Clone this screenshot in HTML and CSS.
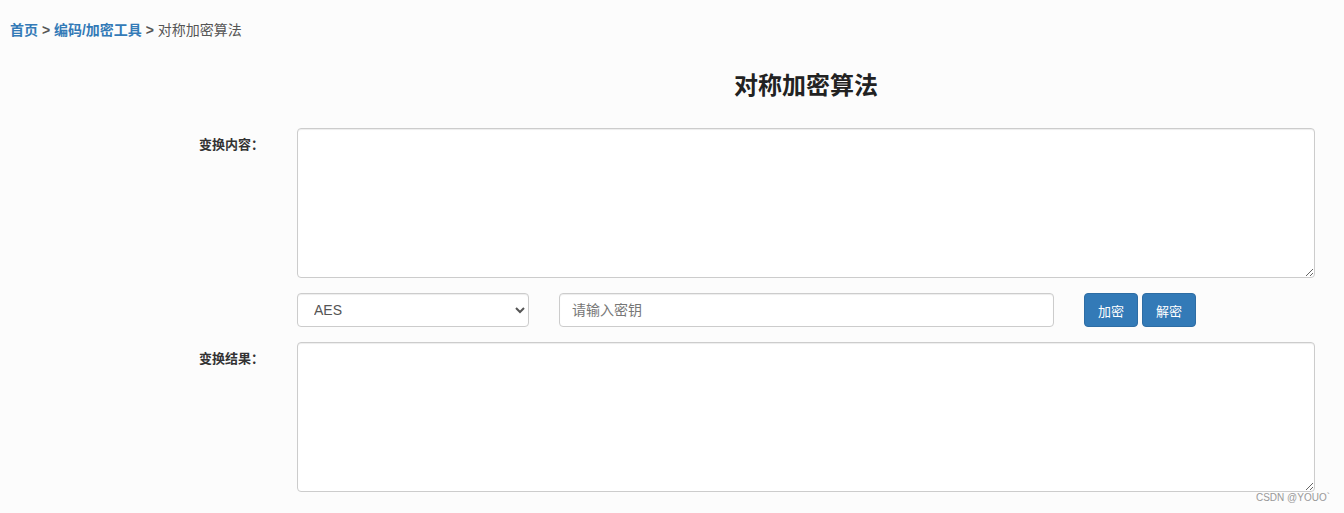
FILE: index.html
```html
<!DOCTYPE html>
<html lang="zh-CN">
<head>
<meta charset="utf-8">
<title>对称加密算法</title>
<link rel="stylesheet" href="styles.css">
</head>
<body>
<div class="crumbs">
  <a class="crumb-link" href="#">首页</a>
  <span class="sep">&gt;</span>
  <a class="crumb-link" href="#">编码/加密工具</a>
  <span class="sep">&gt;</span>
  <span class="crumb-current">对称加密算法</span>
</div>

<div class="form">
  <div class="row title-row">
    <div class="label-col"></div>
    <h1 class="title">对称加密算法</h1>
  </div>

  <div class="row">
    <label class="label-col field-label">变换内容：</label>
    <textarea class="area"></textarea>
  </div>

  <div class="row controls-row">
    <div class="label-col"></div>
    <div class="controls">
      <select class="ctl select">
        <option>AES</option>
        <option>DES</option>
        <option>3DES</option>
      </select>
      <input class="ctl key" type="text" placeholder="请输入密钥">
      <div class="btns">
        <button class="btn">加密</button>
        <button class="btn">解密</button>
      </div>
    </div>
  </div>

  <div class="row">
    <label class="label-col field-label">变换结果：</label>
    <textarea class="area"></textarea>
  </div>
</div>

<div class="watermark">CSDN @YOUO`</div>
</body>
</html>
```

FILE: styles.css
```css
html, body {
  margin: 0;
  padding: 0;
  background: #fcfcfc;
}

body {
  font-family: "Liberation Sans", "Noto Sans CJK SC", sans-serif;
  font-size: 14px;
  color: #333;
  height: 513px;
  position: relative;
  overflow: hidden;
}

.crumbs {
  padding: 20px 0 0 10px;
  height: 20px;
  line-height: 20px;
  font-size: 14px;
}

.crumb-link {
  color: #337ab7;
  font-weight: bold;
  text-decoration: none;
}

.sep {
  color: #555;
  font-weight: bold;
}

.crumb-current {
  color: #555;
}

.form {
  padding-right: 29px;
}

.row {
  display: flex;
}

.label-col {
  width: 297px;
  flex: 0 0 297px;
  box-sizing: border-box;
}

.title-row {
  margin-top: 29px;
  height: 34px;
  align-items: center;
}

.title {
  flex: 1;
  margin: 0;
  text-align: center;
  font-size: 24px;
  line-height: 34px;
  font-weight: bold;
  color: #222;
}

.title-row + .row {
  margin-top: 25px;
}

.field-label {
  text-align: right;
  padding-right: 33px;
  padding-top: 8px;
  font-size: 13px;
  font-weight: bold;
  line-height: 18px;
  color: #333;
}

.area {
  flex: 1;
  height: 150px;
  box-sizing: border-box;
  border: 1px solid #ccc;
  border-radius: 4px;
  background: #fff;
  padding: 6px 12px;
  margin: 0;
  font-family: inherit;
  font-size: 14px;
  box-shadow: inset 0 1px 1px rgba(0, 0, 0, 0.075);
}

.controls-row {
  margin: 15px 0 15px;
}

.controls {
  flex: 1;
  display: flex;
  align-items: center;
}

.ctl {
  height: 34px;
  box-sizing: border-box;
  border: 1px solid #ccc;
  border-radius: 4px;
  background: #fff;
  font-family: inherit;
  font-size: 14px;
  color: #555;
  margin: 0;
  box-shadow: inset 0 1px 1px rgba(0, 0, 0, 0.075);
}

.select {
  width: 232px;
  padding: 6px 12px;
}

.key {
  width: 495px;
  margin-left: 30px;
  padding: 6px 12px;
}

.key::placeholder {
  color: #777;
}

.btns {
  display: flex;
  gap: 4px;
  margin-left: 30px;
}

.btn {
  height: 34px;
  width: 54px;
  box-sizing: border-box;
  border: 1px solid #2e6da4;
  border-radius: 4px;
  background: #337ab7;
  color: #fff;
  font-family: inherit;
  font-size: 13px;
  padding: 0;
  cursor: pointer;
}

.watermark {
  position: absolute;
  right: 14px;
  top: 492px;
  font-size: 10px;
  color: #999;
  line-height: 12px;
}
```
